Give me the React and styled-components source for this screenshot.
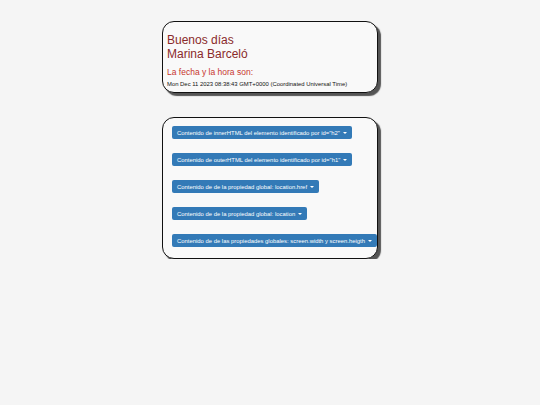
import React from "react";
import styled, { createGlobalStyle } from "styled-components";

const Global = createGlobalStyle`
  html, body { margin: 0; padding: 0; background: #f5f5f5; }
  body { font-family: "Liberation Sans", Arial, sans-serif; }
`;

const Page = styled.div`
  display: flex;
  flex-direction: column;
  align-items: center;
  gap: 24px;
  padding-top: 21px;
`;

const Card = styled.div`
  box-sizing: border-box;
  width: 216px;
  background: #f9f9f9;
  border: 1px solid #111;
  border-radius: 12px;
  box-shadow: 3px 3px 1px #555;
`;

const GreetCard = styled(Card)`
  padding: 12px 4px 4px 4px;
`;

const Greeting = styled.h1`
  margin: 0;
  font-size: 12px;
  font-weight: normal;
  line-height: 13.5px;
  color: #8a2a2a;
`;

const Label = styled.h3`
  margin: 6px 0 0;
  font-size: 8.5px;
  font-weight: normal;
  line-height: 11px;
  color: #c7362e;
`;

const DateText = styled.p`
  margin: 2px 0 0;
  font-size: 5.9px;
  line-height: 8px;
  color: #111;
`;

const ButtonCard = styled(Card)`
  display: flex;
  flex-direction: column;
  align-items: flex-start;
  gap: 14px;
  padding: 8px 0 11px 9px;
`;

const DropButton = styled.button`
  display: inline-flex;
  align-items: center;
  gap: 3px;
  height: 13px;
  padding: 0 5px;
  border: none;
  border-radius: 2px;
  background: #337ab7;
  color: #fff;
  font-family: "Liberation Sans", Arial, sans-serif;
  font-size: 5.9px;
  white-space: nowrap;
  cursor: pointer;
`;

const Caret = styled.span`
  width: 0;
  height: 0;
  border-left: 2px solid transparent;
  border-right: 2px solid transparent;
  border-top: 2px solid #fff;
`;

const buttons = [
  'Contenido de innerHTML del elemento identificado por id="h2"',
  'Contenido de outerHTML del elemento identificado por id="h1"',
  "Contenido de de la propiedad global: location.href",
  "Contenido de de la propiedad global: location",
  "Contenido de de las propiedades globales: screen.width y screen.heigth",
];

export default function App() {
  return (
    <>
      <Global />
      <Page>
        <GreetCard>
          <Greeting>
            Buenos días
            <br />
            Marina Barceló
          </Greeting>
          <Label>La fecha y la hora son:</Label>
          <DateText>Mon Dec 11 2023 08:38:43 GMT+0000 (Coordinated Universal Time)</DateText>
        </GreetCard>
        <ButtonCard>
          {buttons.map((b) => (
            <DropButton key={b}>
              {b}
              <Caret />
            </DropButton>
          ))}
        </ButtonCard>
      </Page>
    </>
  );
}
